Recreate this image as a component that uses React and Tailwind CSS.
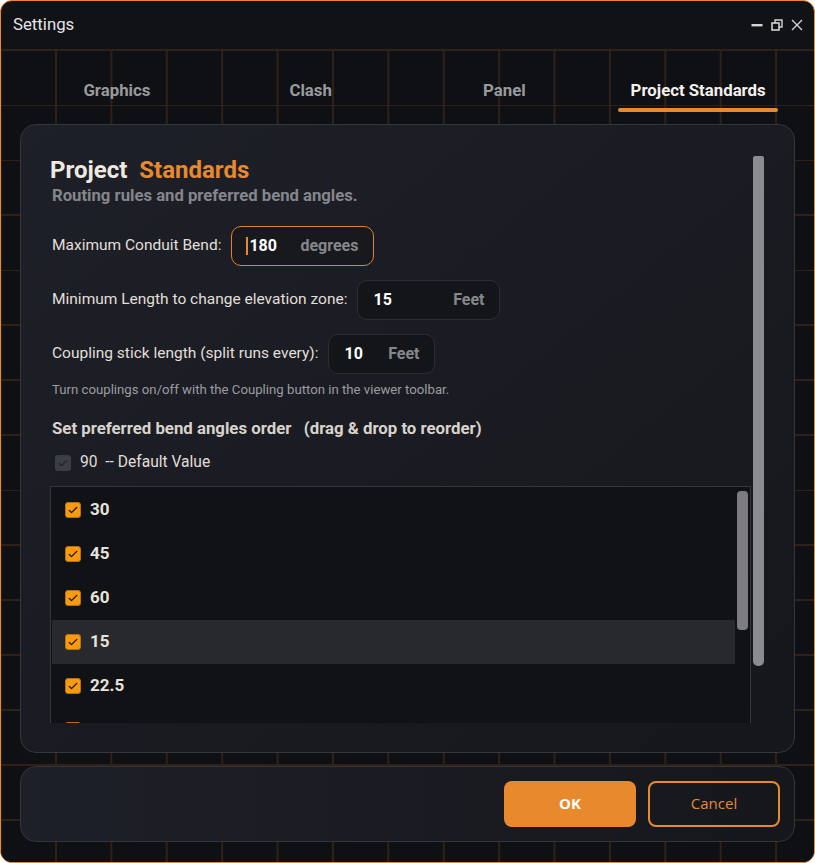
import React from 'react'

const tabs = ['Graphics', 'Clash', 'Panel', 'Project Standards']
const angles = ['30', '45', '60', '15', '22.5', '']

function Check({ muted }) {
  return (
    <span
      className={`w-4 h-4 rounded-[3px] flex items-center justify-center shrink-0 ${
        muted ? 'bg-[#3b3e46]' : 'bg-[#f99a10] border border-[#b8730f]'
      }`}
    >
      <svg viewBox="0 0 16 16" className="w-3 h-3">
        <path
          d="M3 8.5l3 3 7-7"
          fill="none"
          stroke={muted ? '#22242a' : '#1a1410'}
          strokeWidth="1.8"
          strokeLinecap="round"
          strokeLinejoin="round"
        />
      </svg>
    </span>
  )
}

function Field({ label, value, unit, width, active }) {
  return (
    <div className="flex items-center gap-[10px]">
      <span className="text-[15.5px] text-[#e2ded8]">{label}</span>
      <div
        className={`${width} h-10 rounded-[10px] px-[15px] flex items-center justify-between border ${
          active ? 'border-[#e08327] bg-[#18191d]' : 'border-[#2c2d33] bg-[#141519]'
        }`}
      >
        <span className="flex items-center text-[16px] font-bold text-white">
          {active && <span className="w-[2px] h-[18px] bg-[#e8892e] -ml-[1px] mr-[1px]" />}
          {value}
        </span>
        <span className="text-[16px] font-bold text-[#86878c]">{unit}</span>
      </div>
    </div>
  )
}

export default function App() {
  return (
    <div className="w-[815px] h-[863px] bg-white font-['Roboto','Liberation_Sans',sans-serif]">
      <div className="w-full h-full rounded-[12px] border border-[#e8892e] bg-[#111216] overflow-hidden flex flex-col">
        {/* Title bar */}
        <div className="h-[48px] shrink-0 flex items-center justify-between pl-[12px] pr-[11px]">
          <span className="text-[16.8px] text-[#e4e4e6]">Settings</span>
          <div className="flex items-center gap-[8px] text-[#d4d4d6]">
            <svg viewBox="0 0 12 12" className="w-[12px] h-[12px]">
              <rect x="0.5" y="5" width="11" height="2.4" fill="currentColor" />
            </svg>
            <svg viewBox="0 0 12 12" className="w-[12px] h-[12px]">
              <rect x="1" y="4" width="7" height="7" fill="none" stroke="currentColor" strokeWidth="1.6" />
              <path d="M4 4V1h7v7H8" fill="none" stroke="currentColor" strokeWidth="1.4" />
            </svg>
            <svg viewBox="0 0 12 12" className="w-[12px] h-[12px]">
              <path d="M1 1l10 10M11 1L1 11" stroke="currentColor" strokeWidth="1.4" />
            </svg>
          </div>
        </div>

        {/* Body with grid */}
        <div className="flex-1 flex flex-col px-[19px] bg-[#0f1014] [background-image:linear-gradient(to_right,#2e2118_2px,transparent_2px),linear-gradient(to_bottom,#2e2118_2px,transparent_2px)] [background-size:55.4px_55px] [background-position:54px_0]">
          {/* Tabs */}
          <div className="h-[75px] shrink-0 grid grid-cols-4">
            {tabs.map((t, i) => {
              const active = i === tabs.length - 1
              return (
                <div key={t} className="flex flex-col items-center pt-[31px]">
                  <span className={`text-[16.8px] font-bold leading-[20px] ${active ? 'text-[#f2f0ec]' : 'text-[#9a9a9e]'}`}>
                    {t}
                  </span>
                  {active && <span className="mt-[8px] w-[160px] h-[4px] rounded-full bg-[#e8892e]" />}
                </div>
              )
            })}
          </div>

          {/* Main panel */}
          <div className="h-[629px] shrink-0 rounded-[16px] border border-[#34363d] bg-gradient-to-br from-[#1e2029] to-[#16171b] pl-[29px] pr-[29px] pt-[31px] pb-[29px] flex gap-[2px] overflow-hidden">
            <div className="w-[701px] flex flex-col">
              <div className="text-[24px] font-bold leading-[28px] text-[#efe9e0]">
                Project<span className="ml-[12px] text-[#e8892e]">Standards</span>
              </div>
              <div className="mt-[2px] ml-[2px] text-[16.7px] font-bold leading-[20px] text-[#85868b]">
                Routing rules and preferred bend angles.
              </div>

              <div className="mt-[20px] ml-[2px] flex flex-col gap-[14px]">
                <Field label="Maximum Conduit Bend:" value="180" unit="degrees" width="w-[143px]" active />
                <Field label="Minimum Length to change elevation zone:" value="15" unit="Feet" width="w-[143px]" />
                <Field label="Coupling stick length (split runs every):" value="10" unit="Feet" width="w-[107px]" />
              </div>

              <div className="mt-[8px] ml-[2px] text-[13.2px] leading-[16px] text-[#9c9ca0]">
                Turn couplings on/off with the Coupling button in the viewer toolbar.
              </div>

              <div className="mt-[20px] ml-[2px] text-[16.8px] font-bold leading-[20px] text-[#d8d3cc] whitespace-pre">
                {'Set preferred bend angles order   (drag & drop to reorder)'}
              </div>

              <div className="mt-[17px] ml-[5px] flex items-center gap-[9px] h-[16px]">
                <Check muted />
                <span className="text-[15.6px] text-[#e2ded8] whitespace-pre">{'90  -- Default Value'}</span>
              </div>

              {/* Angle list */}
              <div className="mt-[15px] flex-1 min-h-0 bg-[#111216] border border-b-0 border-[#35363b] flex pl-[1px] pt-[1px] overflow-hidden">
                <div className="flex-1 flex flex-col">
                  {angles.map((a, i) => (
                    <div
                      key={i}
                      className={`h-[44px] shrink-0 flex items-center gap-[9px] pl-[13px] ${i === 3 ? 'bg-[#28292d]' : ''}`}
                    >
                      <Check />
                      <span className="text-[17px] font-bold text-[#e6e2dc]">{a}</span>
                    </div>
                  ))}
                </div>
                <div className="w-[11px] h-[139px] mt-[3px] mx-[2px] rounded-[4px] bg-[#7c7c80]" />
              </div>
            </div>
            <div className="w-[11px] h-[510px] rounded-b-[5px] rounded-t-[2px] bg-[#8b8c91]" />
          </div>

          {/* Bottom bar */}
          <div className="mt-[13px] h-[76px] shrink-0 rounded-[16px] border border-[#33353b] bg-gradient-to-r from-[#1e2029] to-[#16171b] flex items-center justify-end gap-[12px] pr-[14px] pb-[1px] font-['Open_Sans','Noto_Sans',sans-serif]">
            <button className="w-[132px] h-[46px] rounded-[8px] bg-[#e8892e] text-white text-[15px] font-bold">
              OK
            </button>
            <button className="w-[132px] h-[46px] rounded-[8px] border-2 border-[#e8892e] text-[#e8892e] text-[15px] font-medium">
              Cancel
            </button>
          </div>
        </div>
      </div>
    </div>
  )
}
